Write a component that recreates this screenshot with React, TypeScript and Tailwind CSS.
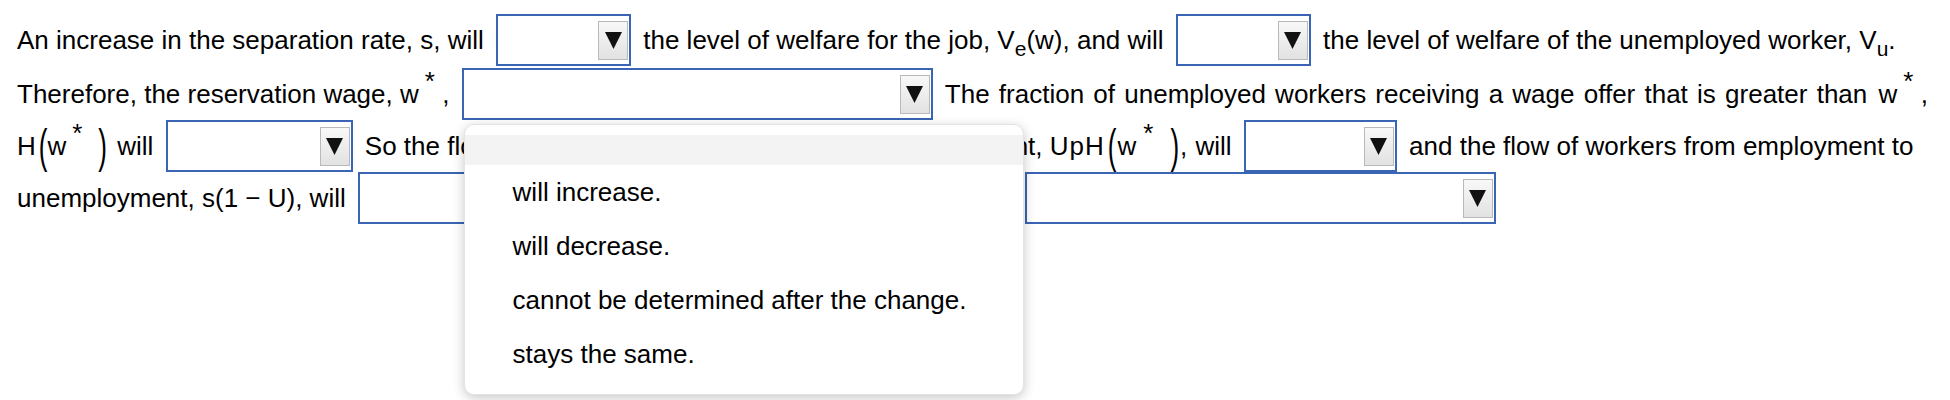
import React from "react";

const options = [
  "will increase.",
  "will decrease.",
  "cannot be determined after the change.",
  "stays the same.",
];

const Arrow = () => (
  <span className="flex h-[39px] w-[30px] items-center justify-center border border-[#b9b9b9] bg-gradient-to-b from-[#f8f8f8] to-[#e2e2e2]">
    <svg width="17" height="17" viewBox="0 0 17 17">
      <path d="M0 0H17L8.5 17Z" fill="#111" />
    </svg>
  </span>
);

const Select = ({
  width,
  children,
}: {
  width: string;
  children?: React.ReactNode;
}) => (
  <span
    className={`relative mx-[5px] inline-block h-[52px] border-2 border-[#3a64b4] bg-white align-top ${width}`}
  >
    <span className="flex h-full items-center justify-end pr-[1px]">
      <Arrow />
    </span>
    {children}
  </span>
);

const Star = () => <span className="relative -top-[13px] ml-[6px]">*</span>;

const Sub = ({ children }: { children: React.ReactNode }) => (
  <span className="relative top-[7px] text-[21px]">{children}</span>
);

const Paren = ({
  children,
  className = "",
}: {
  children: React.ReactNode;
  className?: string;
}) => (
  <span className={`inline-block scale-y-[1.76] ${className}`}>{children}</span>
);

const Hw = ({ pre, className = "" }: { pre: string; className?: string }) => (
  <span className={`whitespace-nowrap ${className}`}>
    {pre}
    <Paren className="ml-[3px]">(</Paren>w
    <Star />
    <Paren className="ml-[16px]">)</Paren>
  </span>
);

const Menu = () => (
  <div className="absolute left-0 top-[54px] z-10 w-[560px] rounded-[10px] border border-[#e4e4e4] bg-white pb-[13px] pt-[10px] leading-normal shadow-[0_3px_12px_rgba(0,0,0,0.22)]">
    <div className="h-[30px] bg-[#f3f3f3]" />
    {options.map((o) => (
      <div key={o} className="flex h-[54px] items-center pl-[48px] text-black">
        {o}
      </div>
    ))}
  </div>
);

const App = () => {
  return (
    <div className="min-h-[400px] w-[1950px] bg-white pl-[17px] pr-[6px] pt-[14px] font-['Liberation_Sans',Arial,sans-serif] text-[26px] leading-[52px] text-black">
      <p>
        An increase in the separation rate, s, will{" "}
        <Select width="w-[135px]" /> the level of welfare for the job, V
        <Sub>e</Sub>(w), and will <Select width="w-[135px]" /> the level of
        welfare of the unemployed worker, V<Sub>u</Sub>. Therefore, the
        reservation wage, <span className="whitespace-nowrap">w<Star /></span>{" "}
        ,{" "}
        <Select width="w-[471px]">
          <Menu />
        </Select>{" "}
        <span className="[word-spacing:2px]">
          The fraction of unemployed workers receiving a wage offer that is
          greater than
        </span>{" "}
        <span className="ml-[4px] whitespace-nowrap">
          w<Star />
        </span>{" "}
        , <Hw pre="H" className="mr-[3px]" /> will{" "}
        <Select width="w-[187px]" /> So the flow of workers from unemployment
        to employment, <Hw pre="UpH" className="tracking-[1px]" />
        <span className="mr-[1px]">,</span> will <Select width="w-[153px]" />{" "}
        and the flow of workers from employment to unemployment, s(1 − U),
        will <Select width="w-[166px]" /> Therefore, the unemployment rate, U,
        will <Select width="w-[471px]" />
      </p>
    </div>
  );
};

export default App;
